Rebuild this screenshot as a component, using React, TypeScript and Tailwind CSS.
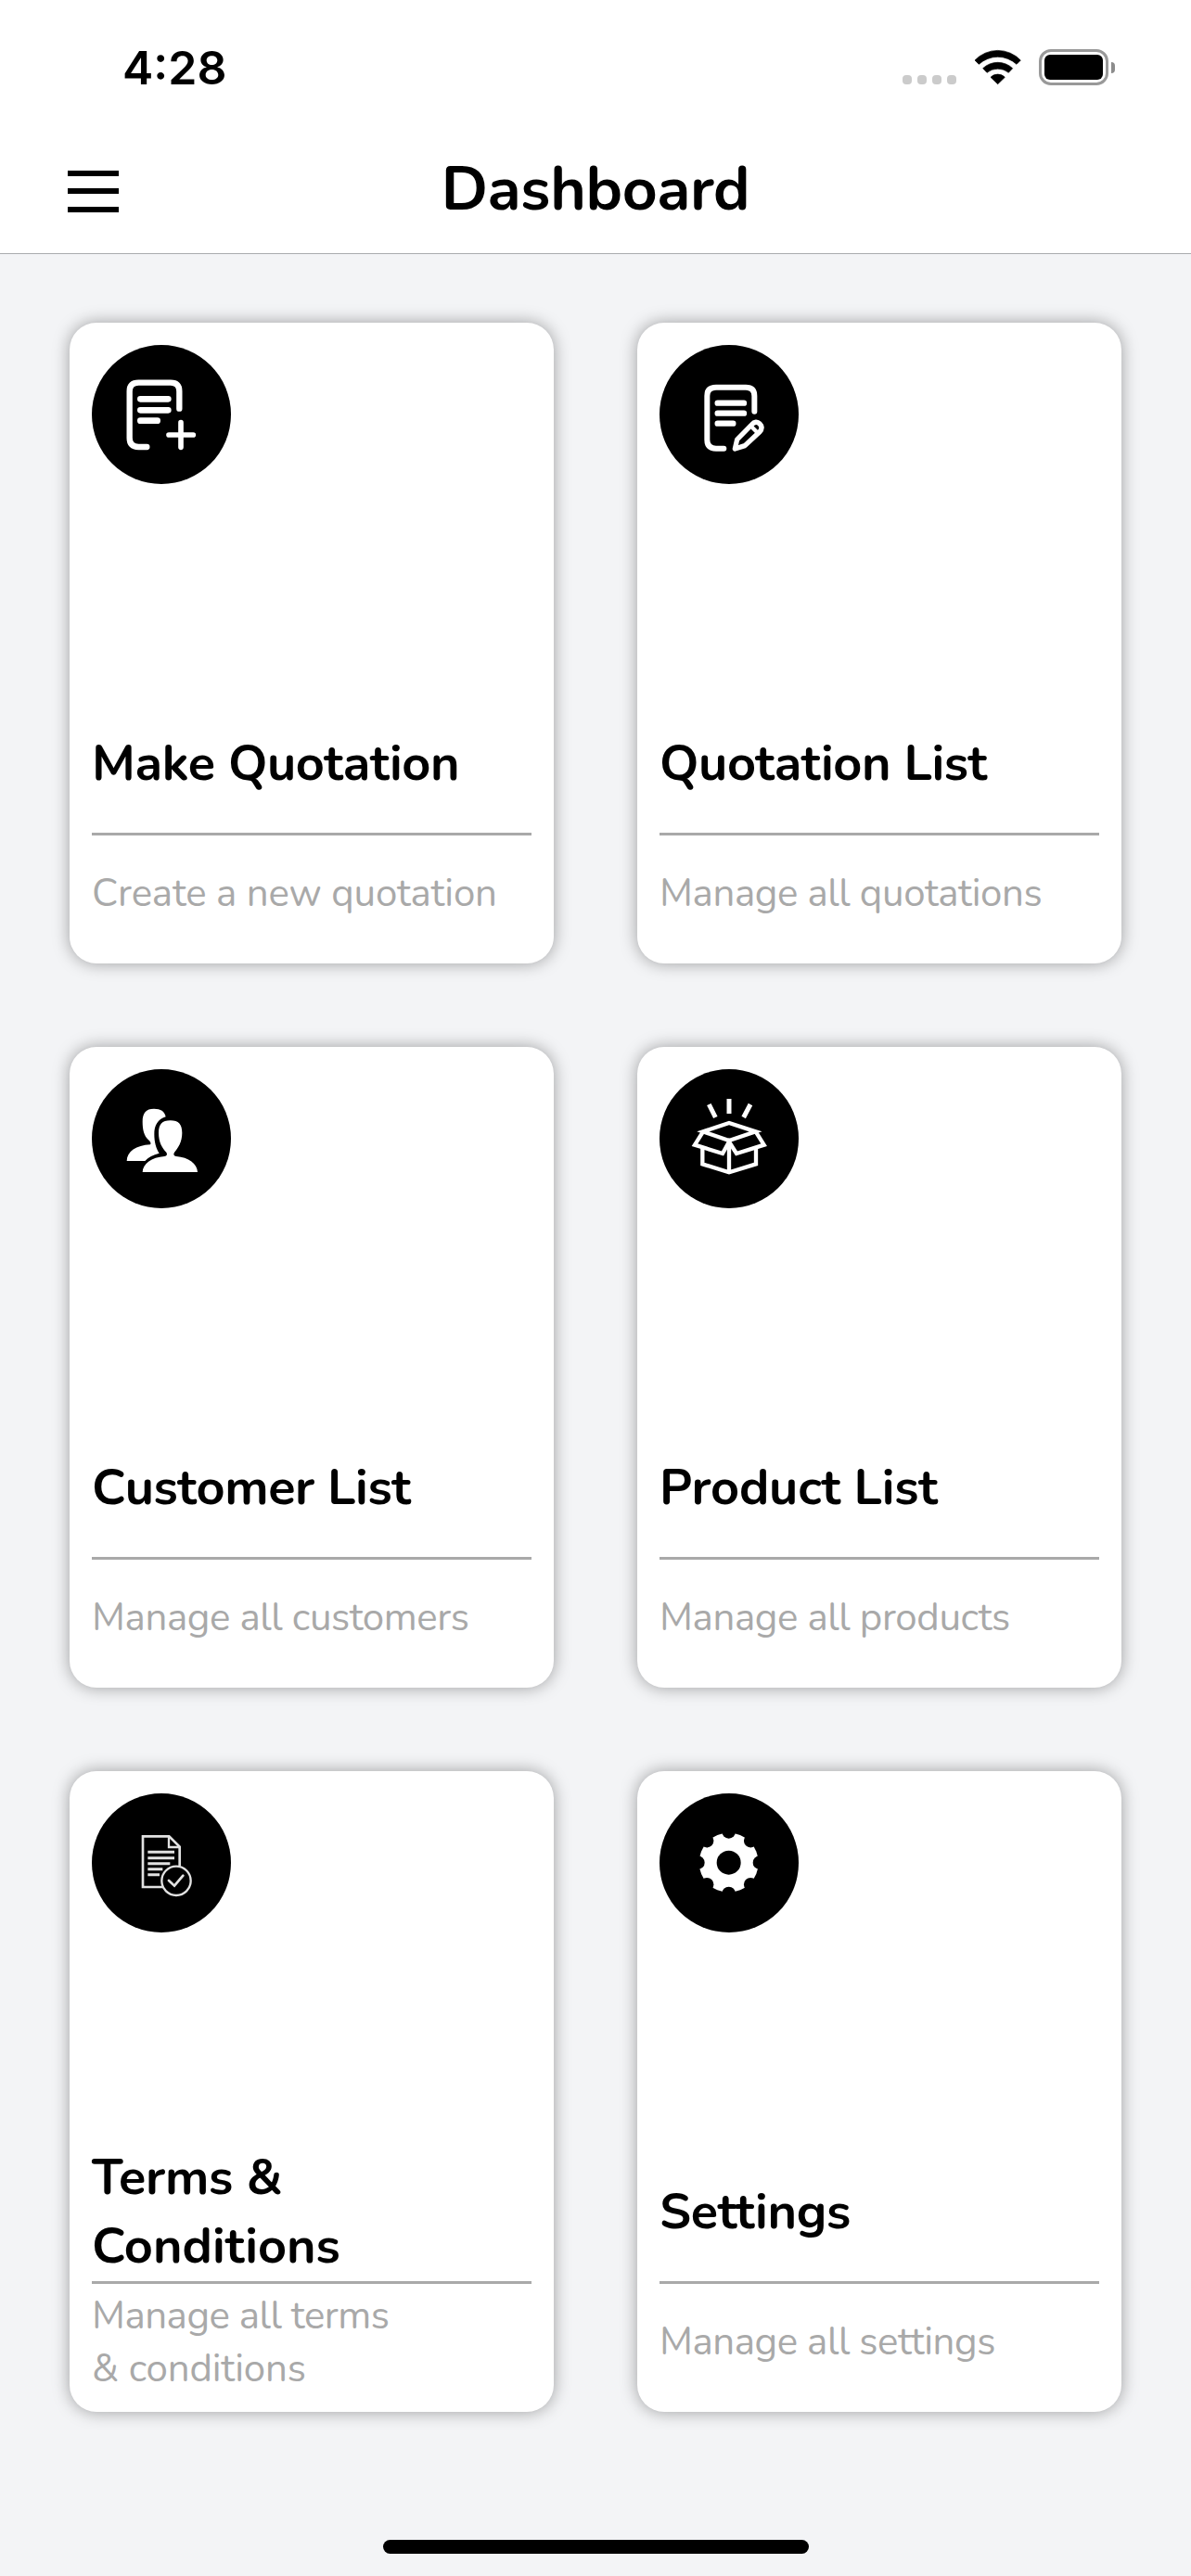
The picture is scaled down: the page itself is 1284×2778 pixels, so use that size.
import type { ReactNode } from "react";

type Line = { text: string; tracking: string };
type Tile = { icon: ReactNode; title: Line[]; subtitle: Line[] };

function Badge({ viewBox, children }: { viewBox: string; children: ReactNode }) {
  return (
    <div className="size-[150px] shrink-0 overflow-hidden rounded-full bg-black">
      <svg viewBox={viewBox} className="size-full" fill="none" stroke="white">
        {children}
      </svg>
    </div>
  );
}

const quotationAdd = (
  <Badge viewBox="117 126 450 450">
    <g strokeLinecap="round" strokeLinejoin="round">
      <path strokeWidth="19" d="M295 456H268Q239 456 239 427V276Q239 248 268 248H372Q400 248 400 276V332" />
      <path strokeWidth="20" d="M274 301H364M274 337H364M274 371H329" />
      <path strokeWidth="17" d="M405 377V457M366 417H445" />
    </g>
  </Badge>
);

const quotationEdit = (
  <Badge viewBox="93 126 450 450">
    <g strokeLinecap="round" strokeLinejoin="round">
      <path strokeWidth="18" d="M301 461H276Q247 461 247 433V291Q247 263 276 263H372Q400 263 400 291V341" />
      <path strokeWidth="19" d="M281 314H366M281 347H366M281 380H331" />
      <path strokeWidth="16" d="M337 462L344 432L391 384Q405 369 417 381Q430 394 416 408L369 452Z" />
      <path strokeWidth="13" d="M388 388L411 411" />
    </g>
  </Badge>
);

const customers = (
  <Badge viewBox="117 129 450 450">
    <g fill="white" stroke="none">
      <path d="M318 257C340 257 352 265 356 283C330 292 319 310 319 340C319 365 325 387 335 401C315 406 300 414 289 426H230C231 395 260 376 306 373C310 369 306 363 300 358C286 345 281 325 281 300C281 270 292 257 318 257Z" />
      <path d="M371 295C398 295 409 308 409 335C409 365 395 385 384 398C380 404 382 410 390 411C430 414 458 435 459 462H281C282 435 310 414 352 411C360 410 362 404 358 398C345 385 333 365 333 335C333 308 344 295 371 295Z" />
    </g>
  </Badge>
);

const products = (
  <Badge viewBox="93 129 450 450">
    <path strokeWidth="13" d="M318 303L234 331L318 360L404 331Z" />
    <path strokeWidth="13" d="M234 331L207 374L297 402L318 364L342 402L431 374L404 331" />
    <path strokeWidth="13" d="M232 380V436L318 463L405 436V380M318 362V463" />
    <path strokeWidth="15" d="M318 225V273M253 243L274 285M387 243L365 285" />
  </Badge>
);

const terms = (
  <Badge viewBox="117 132 450 450">
    <g stroke="#e2e2e2">
      <path strokeWidth="8" d="M347 435H282V271H367L401 305V367" />
      <path strokeWidth="7" d="M366 271V306H401" />
      <path strokeWidth="9" d="M298 322H384M298 341H384M298 359H370M298 377H346M298 395H336" />
      <circle cx="390" cy="415" r="47" strokeWidth="7" />
      <path strokeWidth="8" strokeLinecap="round" d="M366 414L384 431L412 398" />
    </g>
  </Badge>
);

const settings = (
  <Badge viewBox="93 132 450 450">
    <circle cx="317" cy="356" r="96" fill="white" stroke="none" />
    <g fill="black" stroke="none">
      <circle cx="317" cy="356" r="39" />
      {[0, 45, 90, 135, 180, 225, 270, 315].map((a) => (
        <circle key={a} cx="317" cy="256" r="22" transform={`rotate(${a} 317 356)`} />
      ))}
    </g>
  </Badge>
);

const tiles: Tile[] = [
  {
    icon: quotationAdd,
    title: [{ text: "Make Quotation", tracking: "tracking-[-0.36px]" }],
    subtitle: [{ text: "Create a new quotation", tracking: "tracking-[-0.17px]" }],
  },
  {
    icon: quotationEdit,
    title: [{ text: "Quotation List", tracking: "tracking-[-0.38px]" }],
    subtitle: [{ text: "Manage all quotations", tracking: "tracking-[-0.38px]" }],
  },
  {
    icon: customers,
    title: [{ text: "Customer List", tracking: "tracking-[-0.36px]" }],
    subtitle: [{ text: "Manage all customers", tracking: "tracking-[-0.38px]" }],
  },
  {
    icon: products,
    title: [{ text: "Product List", tracking: "tracking-[-0.2px]" }],
    subtitle: [{ text: "Manage all products", tracking: "tracking-[-0.38px]" }],
  },
  {
    icon: terms,
    title: [
      { text: "Terms &", tracking: "tracking-[-0.25px]" },
      { text: "Conditions", tracking: "tracking-normal" },
    ],
    subtitle: [
      { text: "Manage all terms", tracking: "tracking-[-0.47px]" },
      { text: "& conditions", tracking: "tracking-[-0.15px]" },
    ],
  },
  {
    icon: settings,
    title: [{ text: "Settings", tracking: "tracking-[-0.25px]" }],
    subtitle: [{ text: "Manage all settings", tracking: "tracking-[-0.43px]" }],
  },
];

function StatusBar() {
  return (
    <div className="flex h-[136px] items-start justify-between pl-[132px] pr-[82px]">
      <span className="mt-[43px] font-['Inter',sans-serif] text-[50px] font-semibold leading-[60px]">4:28</span>
      <div className="mt-[53px] flex h-[39px]">
        <div className="mr-[19px] mt-7 flex gap-1.5">
          {[0, 1, 2, 3].map((i) => (
            <span key={i} className="size-[10px] rounded-[4px] bg-[#cbcbcb]" />
          ))}
        </div>
        <svg viewBox="270 39 153 117" className="mr-[19px] h-[39px] w-[51px]" stroke="black" strokeWidth="2" strokeLinejoin="round">
          <path d="M273 75A102 102 0 0 1 421 75L408 88A89.5 89.5 0 0 0 286 88Z" />
          <path d="M299 101A70 70 0 0 1 395 101L382 115A55 55 0 0 0 312 115Z" />
          <path d="M324 130A32 32 0 0 1 370 130L347 152Z" />
        </svg>
        <div className="h-[39px] w-[75px] rounded-[13px] border-[3px] border-[#999] p-[3px]">
          <div className="h-[27px] w-[63px] rounded-[6px] bg-black" />
        </div>
        <div className="ml-[3px] mt-[13.5px] h-3 w-1 rounded-r-full bg-[#8c8c8c]" />
      </div>
    </div>
  );
}

function Card({ icon, title, subtitle }: Tile) {
  return (
    <div className="flex h-[691px] flex-col rounded-[29px] bg-white p-6 shadow-[0_0_18px_rgba(0,0,0,0.36)]">
      {icon}
      <div className="mt-auto flex h-[147px] flex-col justify-center pb-[2px] text-[54px] font-bold leading-[73.5px]">
        {title.map((l) => (
          <div key={l.text} className={`whitespace-nowrap ${l.tracking}`}>{l.text}</div>
        ))}
      </div>
      <div className="h-[3px] shrink-0 bg-[#a9a9a9]" />
      <div className="flex h-[114px] flex-col justify-center pt-[11px] text-[42px] leading-[57px] text-[#a9a9a9]">
        {subtitle.map((l) => (
          <div key={l.text} className={`whitespace-nowrap ${l.tracking}`}>{l.text}</div>
        ))}
      </div>
    </div>
  );
}

export default function App() {
  return (
    <div className="flex h-[2778px] w-[1284px] flex-col overflow-hidden bg-[#f3f4f6] font-['Nunito','Lato',sans-serif] text-black">
      <header className="h-[274px] shrink-0 border-b border-[#a9abae] bg-white">
        <StatusBar />
        <div className="grid h-[137px] grid-cols-[1fr_auto_1fr] items-center px-[73px]">
          <button aria-label="Menu" className="mt-[3px] flex w-[55px] flex-col gap-[13.5px]">
            <span className="h-[6px] bg-black" />
            <span className="h-[6px] bg-black" />
            <span className="h-[6px] bg-black" />
          </button>
          <h1 className="pb-[2px] text-[66px] font-bold leading-[90px] tracking-[-0.35px]">Dashboard</h1>
        </div>
      </header>
      <main className="grid grid-cols-[522px_522px] gap-[90px] px-[75px] pt-[74px]">
        {tiles.map((t) => (
          <Card key={t.title[0].text} {...t} />
        ))}
      </main>
      <div className="mx-auto mb-6 mt-auto h-[15px] w-[459px] shrink-0 rounded-full bg-black" />
    </div>
  );
}
